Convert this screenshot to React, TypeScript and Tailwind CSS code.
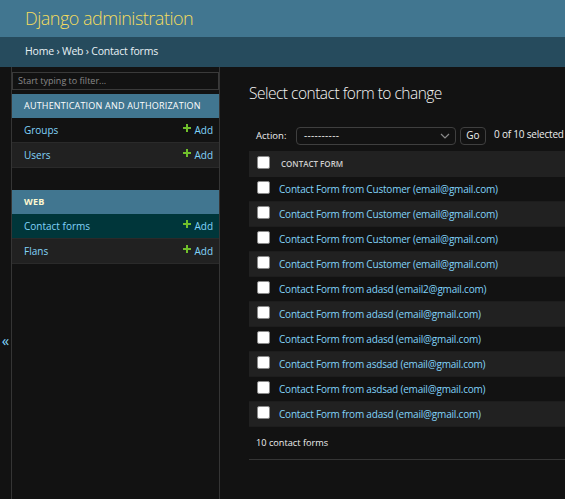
const rows = [
  "Contact Form from Customer (email@gmail.com)",
  "Contact Form from Customer (email@gmail.com)",
  "Contact Form from Customer (email@gmail.com)",
  "Contact Form from Customer (email@gmail.com)",
  "Contact Form from adasd (email2@gmail.com)",
  "Contact Form from adasd (email@gmail.com)",
  "Contact Form from adasd (email@gmail.com)",
  "Contact Form from asdsad (email@gmail.com)",
  "Contact Form from asdsad (email@gmail.com)",
  "Contact Form from adasd (email@gmail.com)",
];

function Plus() {
  return (
    <svg width="8" height="8" viewBox="0 0 8 8" className="mr-[3px] -mt-[5px]">
      <path d="M3 0h2v3h3v2H5v3H3V5H0V3h3z" fill="#70bf2b" />
    </svg>
  );
}

function Checkbox() {
  return <span className="block w-[13px] h-[13px] bg-white border border-[#8a8a8a] rounded-[2px]" />;
}

function NavRow({ label, current, dark }: { label: string; current?: boolean; dark?: boolean }) {
  return (
    <div
      className={`h-[25px] flex items-center justify-between pl-[12px] pr-[6px] border-b border-[#2a2a2a] text-[10px] text-[#81d4fa] ${
        current ? "bg-[#00363a]" : dark ? "bg-[#212121]" : "bg-[#121212]"
      }`}
    >
      <span>{label}</span>
      <span className="flex items-center">
        <Plus />
        Add
      </span>
    </div>
  );
}

export default function App() {
  return (
    <div
      className="w-[565px] h-[499px] overflow-hidden bg-[#121212] text-[#eeeeee] flex flex-col"
      style={{ fontFamily: '"Open Sans", "Noto Sans", sans-serif' }}
    >
      <div className="h-[37px] shrink-0 bg-[#417690] flex items-center px-[25px]">
        <span className="text-[18px] font-light text-[#f5dd5d] tracking-[-0.5px]">Django administration</span>
      </div>
      <div className="h-[30px] shrink-0 bg-[#264b5d] flex items-center px-[25px] text-[10.5px] tracking-[-0.2px] text-[#e8f1f5]">
        Home › Web › Contact forms
      </div>

      <div className="flex flex-1 min-h-0">
        <div className="w-[12px] shrink-0 border-r border-[#353535] flex justify-center pt-[266px] text-[#81d4fa] text-[15px] leading-none">
          «
        </div>

        <div className="w-[208px] shrink-0 border-r border-[#353535] pt-[5px]">
          <div className="h-[18px] border border-[#3a3a3a] bg-[#121212] flex items-center px-[5px] text-[9px] text-[#8a8a8a]">
            Start typing to filter...
          </div>
          <div className="mt-[4px] h-[24px] bg-[#417690] flex items-center pl-[12px] text-[9px] tracking-[0.2px] text-[#ffffff] whitespace-nowrap">
            AUTHENTICATION AND AUTHORIZATION
          </div>
          <NavRow label="Groups" />
          <NavRow label="Users" dark />

          <div className="mt-[22px] h-[24px] bg-[#417690] flex items-center pl-[12px] text-[9px] font-bold tracking-[0.2px] text-[#fff9d0]">
            WEB
          </div>
          <NavRow label="Contact forms" current />
          <NavRow label="Flans" dark />
        </div>

        <div className="flex-1 min-w-0 pl-[29px] pt-[15px]">
          <h1 className="text-[15.5px] font-light text-[#f5f5f5] tracking-[-0.5px] whitespace-nowrap">
            Select contact form to change
          </h1>

          <div className="mt-[21px] flex items-center h-[19px] pl-[7px] text-[10px] whitespace-nowrap">
            <span className="w-[40px] shrink-0 text-[9.5px]">Action:</span>
            <div className="w-[160px] h-[18px] shrink-0 border border-[#3f3f3f] rounded-[4px] flex items-center justify-between pl-[7px] pr-[5px]">
              <span className="text-[10px] tracking-[0.3px]">----------</span>
              <svg width="10" height="6" viewBox="0 0 10 6">
                <path d="M1 1l4 4 4-4" fill="none" stroke="#8a8a8a" strokeWidth="1.2" />
              </svg>
            </div>
            <div className="ml-[4px] w-[26px] h-[18px] shrink-0 border border-[#3f3f3f] rounded-[4px] flex items-center justify-center">
              Go
            </div>
            <span className="ml-[8px] -mt-[3px] tracking-[-0.2px]">0 of 10 selected</span>
          </div>

          <div className="mt-[6px] w-[400px]">
            <div className="h-[26px] bg-[#212121] flex items-center pl-[8px]">
              <span className="-mt-[3px]">
                <Checkbox />
              </span>
              <span className="ml-[11px] text-[8px] font-semibold text-[#cfcfcf]">CONTACT FORM</span>
            </div>
            {rows.map((r, i) => (
              <div
                key={i}
                className={`h-[25px] flex items-center pl-[8px] border-b border-[#1d1d1d] ${
                  i % 2 === 1 ? "bg-[#212121]" : "bg-[#121212]"
                }`}
              >
                <span className="-mt-[3px]">
                  <Checkbox />
                </span>
                <span className="ml-[9px] text-[10px] tracking-[-0.2px] text-[#81d4fa] whitespace-nowrap">{r}</span>
              </div>
            ))}
            <div className="h-[33px] flex items-center pl-[7px] border-b border-[#353535] text-[9.2px]">
              10 contact forms
            </div>
          </div>
        </div>
      </div>
    </div>
  );
}
